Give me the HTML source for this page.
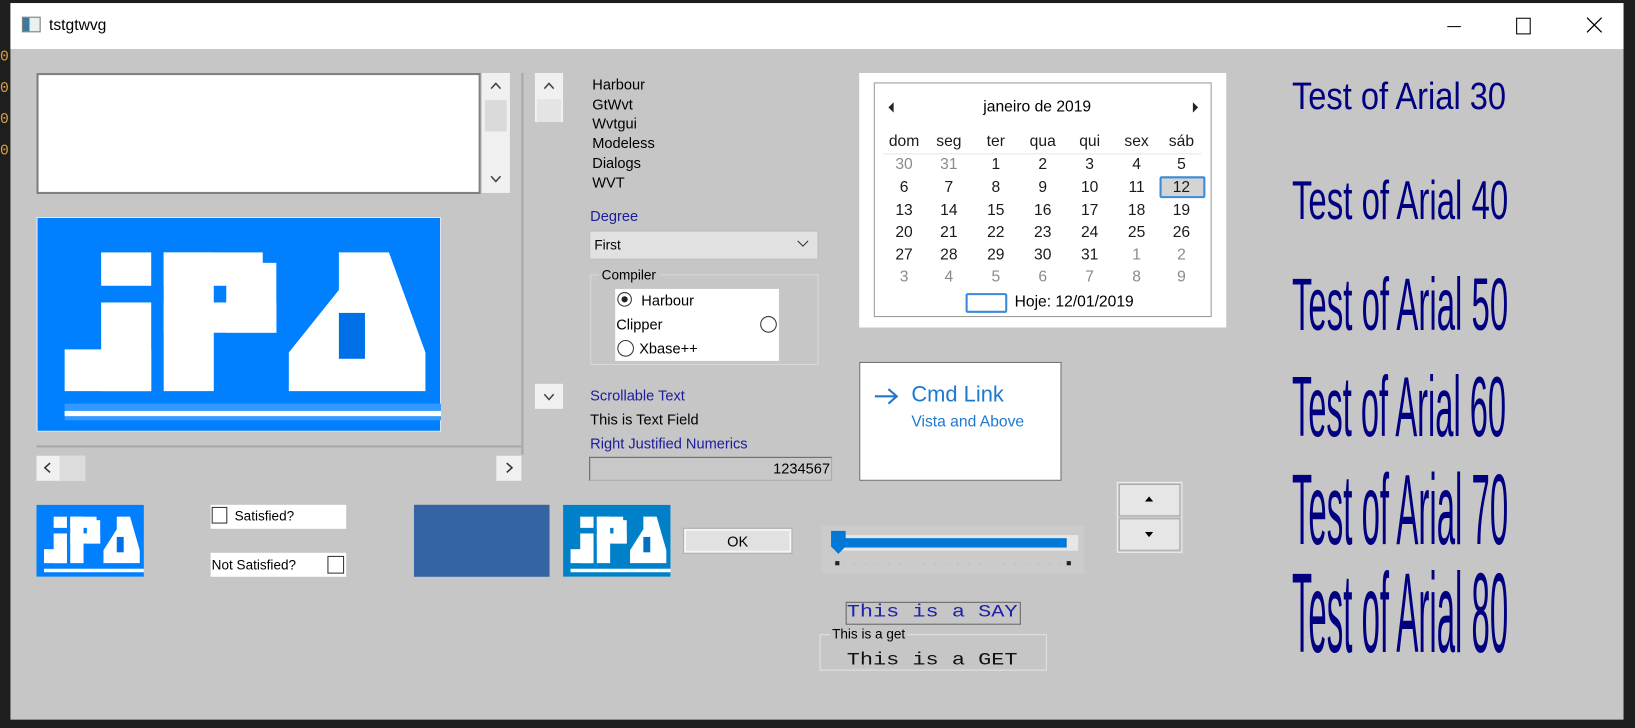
<!DOCTYPE html>
<html><head><meta charset="utf-8">
<style>
html,body{margin:0;padding:0;background:#1e1e1e;width:1635px;height:728px;overflow:hidden}
#w{position:absolute;left:0;top:0;width:1568px;height:698px;transform:scale(1.04273,1.04298);transform-origin:0 0;font-family:"Liberation Sans",Arial,sans-serif;}
.a{position:absolute}
.t{position:absolute;font-size:14px;white-space:nowrap;line-height:16px}
.blue{color:#1c1c9c}
.sb{position:absolute;background:#f0f0f0}
.cal{position:absolute;font-size:15px;width:40px;text-align:center;line-height:18px;color:#1a1a1a}
.g{color:#8a8a8a}
.ar{position:absolute;left:1239px;font-size:31px;line-height:31px;color:#000080;transform-origin:0 0;white-space:nowrap}
.mono{font-family:"Liberation Mono","Courier New",monospace;font-size:21px;line-height:20px;transform:scaleY(0.82);transform-origin:0 50%}
</style></head><body>
<div id="w">
<div class="a" style="left:10px;top:3px;width:1547px;height:687px;background:#c6c6c6"></div>
<div class="a" style="left:10px;top:3px;width:1547px;height:44px;background:#fff"></div>
<div class="a" style="left:0;top:40px;font:14px 'Liberation Mono',monospace;color:#e0a040;line-height:30px">0<br>0<br>0<br>0</div>
<div class="a" style="left:21px;top:16px;width:16px;height:13px;border:1px solid #777;background:linear-gradient(90deg,#3a7a9a 0 40%,#e8f0f0 40%)"></div>
<div class="t" style="left:47px;top:17px;font-size:15px">tstgtwvg</div>
<div class="a" style="left:1388px;top:25px;width:13px;height:1px;background:#000"></div>
<div class="a" style="left:1454px;top:17px;width:12px;height:14px;border:1px solid #000"></div>
<svg class="a" style="left:1521px;top:16px" width="16" height="16"><path d="M1 1L15 15M15 1L1 15" stroke="#000" stroke-width="1.2"/></svg>

<div class="a" style="left:35px;top:70px;height:112px;background:#fff;border:2px solid #808080;box-sizing:content-box;width:422px"></div>
<div class="sb" style="left:462px;top:70px;width:27px;height:115px"></div>
<div class="a" style="left:465px;top:96px;width:21px;height:30px;background:#dadada"></div>
<svg class="a" style="left:470px;top:79px" width="11" height="7"><path d="M1 6L5.5 1L10 6" stroke="#444" stroke-width="1.5" fill="none"/></svg>
<svg class="a" style="left:470px;top:168px" width="11" height="7"><path d="M1 1L5.5 6L10 1" stroke="#444" stroke-width="1.5" fill="none"/></svg>

<svg class="a" style="left:35px;top:208px" width="388" height="206" viewBox="0 0 388 206">
<rect x="0" y="0" width="388" height="206" fill="#0080ff" stroke="#e8e8f8" stroke-width="2"/>
<g fill="#fff">
<rect x="62" y="34" width="48" height="32"/><rect x="62" y="82" width="48" height="85"/><rect x="27" y="127" width="83" height="40"/>
<rect x="122" y="34" width="95" height="32"/><rect x="182" y="44" width="48" height="67"/><rect x="122" y="82" width="108" height="29"/><rect x="122" y="34" width="48" height="133"/>
<path d="M290 34H338L373 130V167H242V130L290 70Z"/>
</g>
<rect x="290" y="92" width="25" height="44" fill="#0070e8"/>
<rect x="27" y="179" width="361" height="16" fill="#3399ff"/>
<rect x="27" y="186" width="361" height="5" fill="#fff"/>
</svg>

<div class="a" style="left:35px;top:427px;width:465px;height:2px;background:#a8a8a8"></div>
<div class="a" style="left:500px;top:70px;width:2px;height:366px;background:#a8a8a8"></div>
<div class="sb" style="left:35px;top:437px;width:47px;height:24px"></div>
<div class="a" style="left:57px;top:437px;width:25px;height:24px;background:#dcdcdc"></div>
<div class="sb" style="left:476px;top:437px;width:24px;height:24px"></div>
<svg class="a" style="left:42px;top:443px" width="7" height="11"><path d="M6 1L1 5.5L6 10" stroke="#333" stroke-width="1.5" fill="none"/></svg>
<svg class="a" style="left:485px;top:443px" width="7" height="11"><path d="M1 1L6 5.5L1 10" stroke="#333" stroke-width="1.5" fill="none"/></svg>
<div class="sb" style="left:513px;top:70px;width:27px;height:47px"></div>
<div class="a" style="left:515px;top:95px;width:23px;height:22px;background:#e4e4e4"></div>
<svg class="a" style="left:521px;top:79px" width="11" height="7"><path d="M1 6L5.5 1L10 6" stroke="#444" stroke-width="1.5" fill="none"/></svg>
<div class="sb" style="left:513px;top:368px;width:27px;height:24px"></div>
<svg class="a" style="left:521px;top:377px" width="11" height="7"><path d="M1 1L5.5 6L10 1" stroke="#444" stroke-width="1.5" fill="none"/></svg>

<div class="t" style="left:568px;top:72px;line-height:18.7px">Harbour<br>GtWvt<br>Wvtgui<br>Modeless<br>Dialogs<br>WVT</div>
<div class="t blue" style="left:566px;top:199px">Degree</div>
<div class="a" style="left:565px;top:221px;width:220px;height:28px;background:#e1e1e1;border:1px solid #bcbcbc;box-sizing:border-box"></div>
<div class="t" style="left:570px;top:227px;font-size:13px">First</div>
<svg class="a" style="left:764px;top:230px" width="12" height="8"><path d="M1 1L6 6L11 1" stroke="#333" fill="none"/></svg>
<div class="a" style="left:566px;top:263px;width:219px;height:87px;border:1px solid #d8d8d8;box-sizing:border-box"></div>
<div class="t" style="left:574px;top:256px;background:#c6c6c6;padding:0 3px;font-size:13px">Compiler</div>
<div class="a" style="left:590px;top:277px;width:157px;height:69px;background:#fff"></div>
<div class="a" style="left:592px;top:280px;width:14px;height:14px;border:1px solid #333;border-radius:50%;box-sizing:border-box"></div>
<div class="a" style="left:596px;top:284px;width:6px;height:6px;background:#222;border-radius:50%"></div>
<div class="t" style="left:615px;top:280px">Harbour</div>
<div class="t" style="left:591px;top:303px">Clipper</div>
<div class="a" style="left:729px;top:303px;width:16px;height:16px;border:1px solid #333;border-radius:50%;box-sizing:border-box"></div>
<div class="a" style="left:592px;top:326px;width:16px;height:16px;border:1px solid #333;border-radius:50%;box-sizing:border-box"></div>
<div class="t" style="left:613px;top:326px">Xbase++</div>

<div class="t blue" style="left:566px;top:371px">Scrollable Text</div>
<div class="t" style="left:566px;top:394px">This is Text Field</div>
<div class="t blue" style="left:566px;top:417px">Right Justified Numerics</div>
<div class="a" style="left:565px;top:438px;width:233px;height:23px;background:#c8c8c8;border:1px solid #666;border-bottom-color:#aaa;border-right-color:#aaa;box-sizing:border-box"></div>
<div class="t" style="left:565px;top:441px;width:231px;text-align:right">1234567</div>

<div class="a" style="left:824px;top:70px;width:352px;height:244px;background:#fff"></div>
<div class="a" style="left:838px;top:79px;width:324px;height:225px;border:1px solid #9a9a9a;box-sizing:border-box"></div>
<svg class="a" style="left:851px;top:97px" width="8" height="12"><path d="M6 1L1 6L6 11Z" fill="#222"/></svg>
<svg class="a" style="left:1143px;top:97px" width="8" height="12"><path d="M1 1L6 6L1 11Z" fill="#222"/></svg>
<div class="t" style="left:943px;top:95px;font-size:15px">janeiro de 2019</div>
<div class="a" style="left:847px;top:147px;width:305px;height:1px;background:#e6e6e6"></div>
<div class="a" style="left:1112px;top:169px;width:44px;height:21px;background:#d4d4d4;border:2px solid #3a8ad8;border-radius:2px;box-sizing:border-box"></div>
<div class="a" style="left:926px;top:281px;width:40px;height:19px;border:2px solid #3a8ad8;border-radius:2px;box-sizing:border-box"></div>
<div class="t" style="left:973px;top:282px;font-size:15px">Hoje: 12/01/2019</div>
<div id="cal"></div>

<div class="a" style="left:824px;top:347px;width:194px;height:114px;background:#fff;border:1px solid #6e6e6e;box-sizing:border-box"></div>
<svg class="a" style="left:837px;top:370px" width="26" height="20"><path d="M2 10H23M15 3L23 10L15 17" stroke="#1e78d0" stroke-width="2" fill="none"/></svg>
<div class="t" style="left:874px;top:367px;font-size:21px;line-height:24px;color:#1e78d0">Cmd Link</div>
<div class="t" style="left:874px;top:397px;font-size:15px;color:#1e78d0">Vista and Above</div>

<div class="ar" style="top:74px;transform:scale(1.01,1.17)">Test of Arial 30</div>
<div class="ar" style="top:166px;transform:scale(1.02,1.70)">Test of Arial 40</div>
<div class="ar" style="top:257px;transform:scale(1.02,2.29)">Test of Arial 50</div>
<div class="ar" style="top:349px;transform:scale(1.01,2.65)">Test of Arial 60</div>
<div class="ar" style="top:441px;transform:scale(1.02,3.1)">Test of Arial 70</div>
<div class="ar" style="top:534px;transform:scale(1.02,3.5)">Test of Arial 80</div>

<svg class="a" style="left:35px;top:484px" width="103" height="69" viewBox="0 0 388 206" preserveAspectRatio="none">
<rect width="388" height="206" fill="#0080ff"/>
<g fill="#fff"><rect x="62" y="34" width="48" height="32"/><rect x="62" y="82" width="48" height="85"/><rect x="27" y="127" width="83" height="40"/><rect x="122" y="34" width="95" height="32"/><rect x="182" y="44" width="48" height="67"/><rect x="122" y="82" width="108" height="29"/><rect x="122" y="34" width="48" height="133"/><path d="M290 34H338L373 130V167H242V130L290 70Z"/></g>
<rect x="290" y="92" width="25" height="44" fill="#0070e8"/><rect x="27" y="183" width="361" height="10" fill="#fff"/>
</svg>
<div class="a" style="left:202px;top:484px;width:130px;height:23px;background:#fff"></div>
<div class="a" style="left:203px;top:486px;width:15px;height:16px;border:1px solid #333;box-sizing:border-box"></div>
<div class="t" style="left:225px;top:487px;font-size:13px">Satisfied?</div>
<div class="a" style="left:202px;top:530px;width:130px;height:23px;background:#fff"></div>
<div class="t" style="left:203px;top:534px;font-size:13px">Not Satisfied?</div>
<div class="a" style="left:314px;top:533px;width:16px;height:17px;border:1px solid #333;box-sizing:border-box"></div>
<div class="a" style="left:397px;top:484px;width:130px;height:69px;background:#3464a4"></div>
<svg class="a" style="left:540px;top:484px" width="103" height="69" viewBox="0 0 388 206" preserveAspectRatio="none">
<rect width="388" height="206" fill="#0080c8"/>
<g fill="#fff"><rect x="62" y="34" width="48" height="32"/><rect x="62" y="82" width="48" height="85"/><rect x="27" y="127" width="83" height="40"/><rect x="122" y="34" width="95" height="32"/><rect x="182" y="44" width="48" height="67"/><rect x="122" y="82" width="108" height="29"/><rect x="122" y="34" width="48" height="133"/><path d="M290 34H338L373 130V167H242V130L290 70Z"/></g>
<rect x="290" y="92" width="25" height="44" fill="#0070c0"/><rect x="27" y="183" width="361" height="10" fill="#fff"/>
</svg>
<div class="a" style="left:656px;top:507px;width:103px;height:23px;background:#e1e1e1;border:2px solid #f4f4f4;outline:1px solid #adadad;box-sizing:border-box"></div>
<div class="t" style="left:656px;top:511px;width:103px;text-align:center">OK</div>

<div class="a" style="left:788px;top:504px;width:252px;height:46px;background:#cbcbcb"></div>
<div class="a" style="left:800px;top:513px;width:234px;height:15px;background:#e6e6e6"></div>
<div class="a" style="left:805px;top:516px;width:218px;height:9px;background:#0078d7"></div>
<svg class="a" style="left:796px;top:508px" width="16" height="24"><path d="M1 1H15V16L8 23L1 16Z" fill="#0078d7"/></svg>
<div class="a" style="left:801px;top:538px;width:4px;height:4px;background:#222"></div>
<div class="a" style="left:1023px;top:538px;width:4px;height:4px;background:#222"></div>
<div class="a" style="left:808px;top:540px;width:212px;height:1px;background:repeating-linear-gradient(90deg,#b0b0b0 0 1px,transparent 1px 11px)"></div>

<div class="a" style="left:1071px;top:462px;width:63px;height:68px;border:1px solid #f0f0f0;box-sizing:border-box"></div>
<div class="a" style="left:1073px;top:464px;width:59px;height:31px;background:#e6e6e6;border:1px solid #aaa;box-sizing:border-box"></div>
<div class="a" style="left:1073px;top:497px;width:59px;height:31px;background:#e6e6e6;border:1px solid #aaa;box-sizing:border-box"></div>
<svg class="a" style="left:1098px;top:476px" width="8" height="5"><path d="M0 5L4 0L8 5Z" fill="#000"/></svg>
<svg class="a" style="left:1098px;top:510px" width="8" height="5"><path d="M0 0L4 5L8 0Z" fill="#000"/></svg>

<div class="a" style="left:811px;top:577px;width:168px;height:22px;border:1px solid #666;box-sizing:border-box"></div>
<div class="t mono" style="left:812px;top:578px;color:#2020a8">This is a SAY</div>
<div class="a" style="left:786px;top:608px;width:218px;height:35px;border:1px solid #e2e2e2;box-sizing:border-box"></div>
<div class="t" style="left:796px;top:600px;background:#c6c6c6;padding:0 2px;font-size:13px">This is a get</div>
<div class="t mono" style="left:812px;top:624px;color:#111">This is a GET</div>
</div>
<script>
var c=document.getElementById('cal'),cols=[867,910,955,1000,1045,1090,1133],rows=[136,158,180,202,223,245,266];
var h=['dom','seg','ter','qua','qui','sex','sáb'];
var d=[[30,31,1,2,3,4,5],[6,7,8,9,10,11,12],[13,14,15,16,17,18,19],[20,21,22,23,24,25,26],[27,28,29,30,31,1,2],[3,4,5,6,7,8,9]];
var s='';
for(var i=0;i<7;i++)s+='<div class="cal" style="left:'+(cols[i]-20)+'px;top:'+(rows[0]-9)+'px">'+h[i]+'</div>';
for(var r=0;r<6;r++)for(var i=0;i<7;i++){var g=(r==0&&i<2)||(r==4&&i>4)||r==5;
s+='<div class="cal'+(g?' g':'')+'" style="left:'+(cols[i]-20)+'px;top:'+(rows[r+1]-9)+'px">'+d[r][i]+'</div>';}
c.innerHTML=s;
</script>
</body></html>
